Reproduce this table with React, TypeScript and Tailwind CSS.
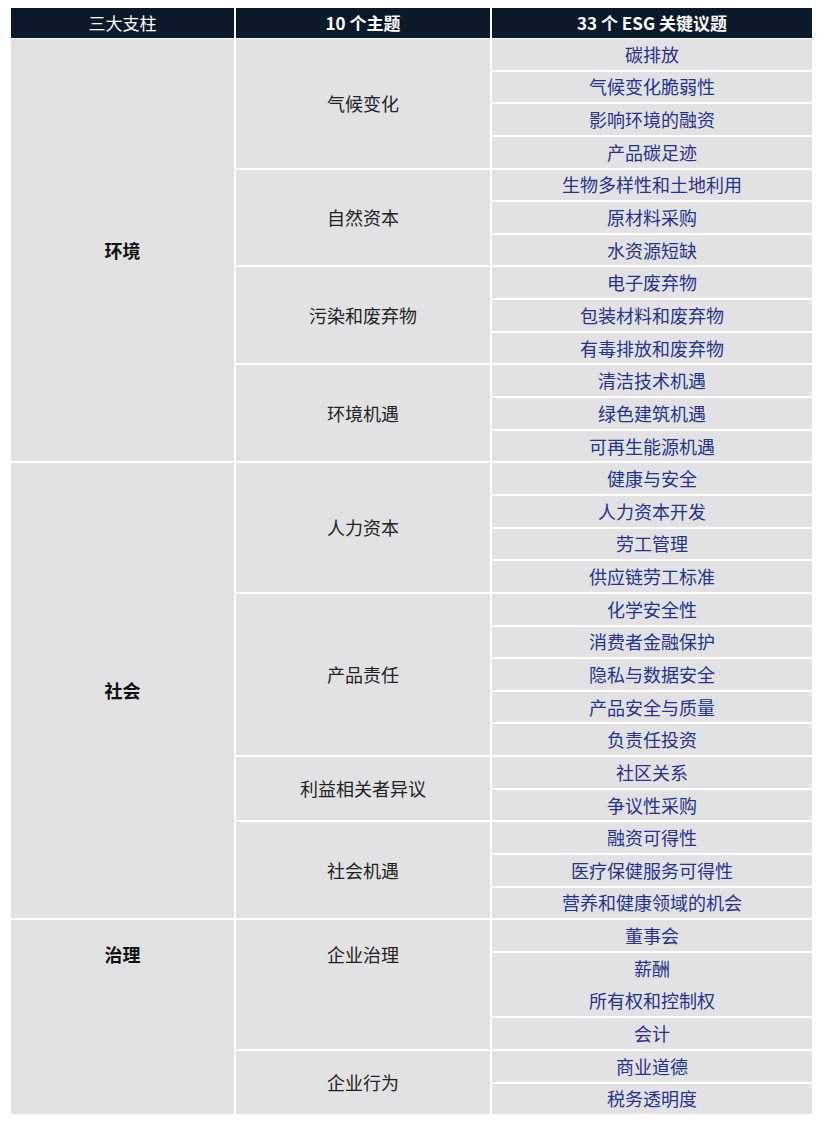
const font = { fontFamily: '"Noto Sans CJK SC", "Liberation Sans", sans-serif' };

type Theme = { name: string; top?: boolean; issues: (string | string[])[] };
type Pillar = { name: string; top?: boolean; themes: Theme[] };

const pillars: Pillar[] = [
  {
    name: '环境',
    themes: [
      { name: '气候变化', issues: ['碳排放', '气候变化脆弱性', '影响环境的融资', '产品碳足迹'] },
      { name: '自然资本', issues: ['生物多样性和土地利用', '原材料采购', '水资源短缺'] },
      { name: '污染和废弃物', issues: ['电子废弃物', '包装材料和废弃物', '有毒排放和废弃物'] },
      { name: '环境机遇', issues: ['清洁技术机遇', '绿色建筑机遇', '可再生能源机遇'] },
    ],
  },
  {
    name: '社会',
    themes: [
      { name: '人力资本', issues: ['健康与安全', '人力资本开发', '劳工管理', '供应链劳工标准'] },
      {
        name: '产品责任',
        issues: ['化学安全性', '消费者金融保护', '隐私与数据安全', '产品安全与质量', '负责任投资'],
      },
      { name: '利益相关者异议', issues: ['社区关系', '争议性采购'] },
      { name: '社会机遇', issues: ['融资可得性', '医疗保健服务可得性', '营养和健康领域的机会'] },
    ],
  },
  {
    name: '治理',
    top: true,
    themes: [
      { name: '企业治理', top: true, issues: ['董事会', ['薪酬', '所有权和控制权'], '会计'] },
      { name: '企业行为', issues: ['商业道德', '税务透明度'] },
    ],
  },
];

function IssueCell({ issue }: { issue: string | string[] }) {
  if (Array.isArray(issue)) {
    return (
      <div className="flex h-[63.3px] flex-col bg-[#e2e2e4] text-[18px] text-[#27338a]">
        {issue.map((t) => (
          <div key={t} className="flex flex-1 items-center justify-center">
            {t}
          </div>
        ))}
      </div>
    );
  }
  return (
    <div className="flex h-[30.65px] items-center justify-center bg-[#e2e2e4] text-[18px] text-[#27338a]">
      {issue}
    </div>
  );
}

export default function App() {
  return (
    <div className="min-h-screen bg-white pt-[8px] pl-[11px]" style={font}>
      <div className="w-[801px]">
        <div className="grid h-[30px] grid-cols-[223px_254px_320px] gap-x-[2px] bg-white">
          <div className="flex items-center justify-center bg-[#0b1a2b] text-[17px] text-white">三大支柱</div>
          <div className="flex items-center justify-center bg-[#0b1a2b] text-[17px] font-bold text-white">
            10 个主题
          </div>
          <div className="flex items-center justify-center bg-[#0b1a2b] text-[17px] font-bold text-white">
            33 个 ESG 关键议题
          </div>
        </div>
        <div className="mt-[1px] flex flex-col gap-[2px] bg-white">
          {pillars.map((p) => (
            <div key={p.name} className="flex gap-[2px]">
              <div
                className={`flex w-[223px] shrink-0 justify-center bg-[#e2e2e4] text-[18px] font-bold text-[#111] ${
                  p.top ? 'items-start pt-[21px]' : 'items-center'
                }`}
              >
                {p.name}
              </div>
              <div className="flex flex-1 flex-col gap-[2px]">
                {p.themes.map((t) => (
                  <div key={t.name} className="flex gap-[2px]">
                    <div
                      className={`flex w-[254px] shrink-0 justify-center bg-[#e2e2e4] text-[18px] text-[#222] ${
                        t.top ? 'items-start pt-[21px]' : 'items-center'
                      }`}
                    >
                      {t.name}
                    </div>
                    <div className="flex flex-1 flex-col gap-[2px]">
                      {t.issues.map((i, k) => (
                        <IssueCell key={k} issue={i} />
                      ))}
                    </div>
                  </div>
                ))}
              </div>
            </div>
          ))}
        </div>
      </div>
    </div>
  );
}
